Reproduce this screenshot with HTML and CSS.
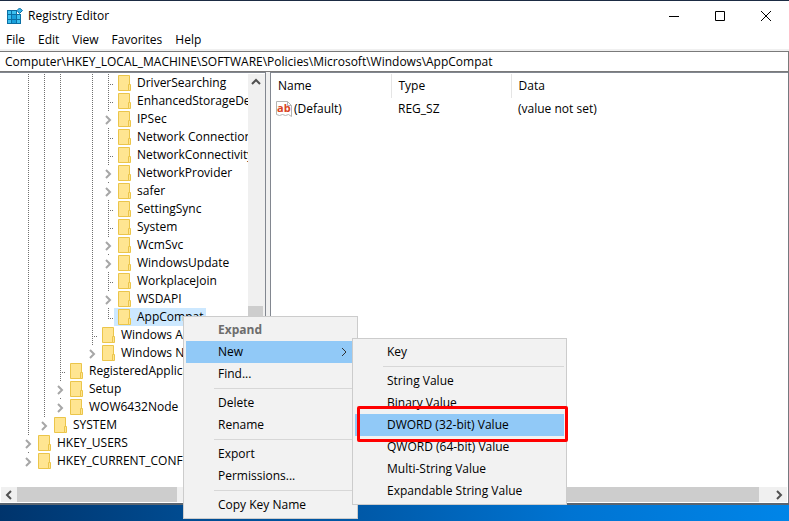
FILE: index.html
```html
<!DOCTYPE html>
<html lang="en">
<head>
    <meta charset="UTF-8">
    <meta name="viewport" content="width=device-width, initial-scale=1.0">
    <title>Registry Editor</title>
    <link rel="stylesheet" href="styles.css">
</head>
<body>
    <!-- Shared icons -->
    <svg class="sprite" aria-hidden="true">
        <symbol id="folder" viewBox="0 0 14 16">
            <path d="M.5 .5h11v15H.5z" fill="#ffe591" stroke="#ebc54a"/>
            <path d="M10.5 9.5h2v6h-2z" fill="#ffe591" stroke="#ebc54a"/>
        </symbol>
        <symbol id="chevron" viewBox="0 0 10 10">
            <path d="M3 1l4 4-4 4" fill="none" stroke="currentColor"/>
        </symbol>
    </svg>

    <div class="window">
        <header class="title-bar">
            <svg class="app-icon" viewBox="0 0 16 16" aria-hidden="true">
                <path d="M0 2h10v4h4v10H0z" fill="#0b6fa4"/>
                <path d="M1 3h3v3H1zM5 3h4v3H5zM1 7h3v4H1zM1 12h3v3H1zM10 7h3v4h-3zM10 12h3v3h-3z" fill="#3cc0ef"/>
                <path d="M5 7h4v4H5zM5 12h4v3H5z" fill="#19a0dc"/>
                <path d="M12.5 0L15.5 2.500 12.5 5.500 10 2.500z" fill="#3cb4e8" stroke="#0b6fa4"/>
            </svg>
            <h1 class="title">Registry Editor</h1>
            <div class="window-buttons">
                <button class="window-button" aria-label="Minimize">
                    <svg viewBox="0 0 10 10"><path d="M0 5.500h10" stroke="#000"/></svg>
                </button>
                <button class="window-button" aria-label="Maximize">
                    <svg viewBox="0 0 10 10"><path d="M.5 .5h9v9h-9z" fill="none" stroke="#000"/></svg>
                </button>
                <button class="window-button" aria-label="Close">
                    <svg viewBox="0 0 10 10"><path d="M0 0l10 10M10 0L0 10" stroke="#000"/></svg>
                </button>
            </div>
        </header>

        <nav class="menu-bar">
            <button>File</button>
            <button>Edit</button>
            <button>View</button>
            <button>Favorites</button>
            <button>Help</button>
        </nav>

        <input class="address" type="text" aria-label="Address" value="Computer\HKEY_LOCAL_MACHINE\SOFTWARE\Policies\Microsoft\Windows\AppCompat">

        <main class="panes">
            <section class="tree-pane">
                <div class="tree-view">
                    <!-- The parent keys are scrolled out of view -->
                    <ul class="tree">
                        <li><ul>
                            <li><ul>
                                <li><ul>
                                    <li class="no-line"><ul>
                                        <li><ul>
                                            <li><div class="row"><span class="branch"></span><svg class="folder"><use href="#folder"/></svg><span class="label">DriverSearching</span></div></li>
                                            <li><div class="row"><span class="branch"></span><svg class="folder"><use href="#folder"/></svg><span class="label">EnhancedStorageDevices</span></div></li>
                                            <li><div class="row"><button class="expander" aria-label="Expand IPSec"><svg><use href="#chevron"/></svg></button><svg class="folder"><use href="#folder"/></svg><span class="label">IPSec</span></div></li>
                                            <li><div class="row"><span class="branch"></span><svg class="folder"><use href="#folder"/></svg><span class="label">Network Connections</span></div></li>
                                            <li><div class="row"><span class="branch"></span><svg class="folder"><use href="#folder"/></svg><span class="label">NetworkConnectivityStatusIndicator</span></div></li>
                                            <li><div class="row"><button class="expander" aria-label="Expand NetworkProvider"><svg><use href="#chevron"/></svg></button><svg class="folder"><use href="#folder"/></svg><span class="label">NetworkProvider</span></div></li>
                                            <li><div class="row"><button class="expander" aria-label="Expand safer"><svg><use href="#chevron"/></svg></button><svg class="folder"><use href="#folder"/></svg><span class="label">safer</span></div></li>
                                            <li><div class="row"><span class="branch"></span><svg class="folder"><use href="#folder"/></svg><span class="label">SettingSync</span></div></li>
                                            <li><div class="row"><span class="branch"></span><svg class="folder"><use href="#folder"/></svg><span class="label">System</span></div></li>
                                            <li><div class="row"><button class="expander" aria-label="Expand WcmSvc"><svg><use href="#chevron"/></svg></button><svg class="folder"><use href="#folder"/></svg><span class="label">WcmSvc</span></div></li>
                                            <li><div class="row"><button class="expander" aria-label="Expand WindowsUpdate"><svg><use href="#chevron"/></svg></button><svg class="folder"><use href="#folder"/></svg><span class="label">WindowsUpdate</span></div></li>
                                            <li><div class="row"><span class="branch"></span><svg class="folder"><use href="#folder"/></svg><span class="label">WorkplaceJoin</span></div></li>
                                            <li><div class="row"><button class="expander" aria-label="Expand WSDAPI"><svg><use href="#chevron"/></svg></button><svg class="folder"><use href="#folder"/></svg><span class="label">WSDAPI</span></div></li>
                                            <li><div class="row"><span class="branch"></span><span class="selected"><svg class="folder"><use href="#folder"/></svg><span class="label">AppCompat</span></span></div></li>
                                        </ul></li>
                                        <li><div class="row"><span class="branch"></span><svg class="folder"><use href="#folder"/></svg><span class="label">Windows Advanced Threat Protection</span></div></li>
                                        <li><div class="row"><button class="expander" aria-label="Expand Windows NT"><svg><use href="#chevron"/></svg></button><svg class="folder"><use href="#folder"/></svg><span class="label">Windows NT</span></div></li>
                                    </ul></li>
                                </ul></li>
                                <li><div class="row"><span class="branch"></span><svg class="folder"><use href="#folder"/></svg><span class="label">RegisteredApplications</span></div></li>
                                <li><div class="row"><button class="expander" aria-label="Expand Setup"><svg><use href="#chevron"/></svg></button><svg class="folder"><use href="#folder"/></svg><span class="label">Setup</span></div></li>
                                <li><div class="row"><button class="expander" aria-label="Expand WOW6432Node"><svg><use href="#chevron"/></svg></button><svg class="folder"><use href="#folder"/></svg><span class="label">WOW6432Node</span></div></li>
                            </ul></li>
                            <li><div class="row"><button class="expander" aria-label="Expand SYSTEM"><svg><use href="#chevron"/></svg></button><svg class="folder"><use href="#folder"/></svg><span class="label">SYSTEM</span></div></li>
                        </ul></li>
                        <li><div class="row"><button class="expander" aria-label="Expand HKEY_USERS"><svg><use href="#chevron"/></svg></button><svg class="folder"><use href="#folder"/></svg><span class="label">HKEY_USERS</span></div></li>
                        <li><div class="row"><button class="expander" aria-label="Expand HKEY_CURRENT_CONFIG"><svg><use href="#chevron"/></svg></button><svg class="folder"><use href="#folder"/></svg><span class="label">HKEY_CURRENT_CONFIG</span></div></li>
                    </ul>
                    <div class="scroll-v">
                        <button class="scroll-button up" aria-label="Scroll up"><svg><use href="#chevron"/></svg></button>
                        <div class="thumb"></div>
                        <button class="scroll-button down" aria-label="Scroll down"><svg><use href="#chevron"/></svg></button>
                    </div>
                </div>
                <div class="scroll-h">
                    <button class="scroll-button left" aria-label="Scroll left"><svg><use href="#chevron"/></svg></button>
                    <div class="thumb"></div>
                    <button class="scroll-button right" aria-label="Scroll right"><svg><use href="#chevron"/></svg></button>
                </div>
            </section>

            <section class="list-pane">
                <div class="list-view">
                    <table class="values">
                        <thead>
                            <tr><th>Name</th><th>Type</th><th>Data</th></tr>
                        </thead>
                        <tbody>
                            <tr>
                                <td>
                                    <div class="value-name">
                                        <svg class="value-icon" viewBox="0 0 16 16" aria-hidden="true">
                                            <path d="M.5 .5h11l4 4v11l-3-2-3 1-3-1-3 1-3-1z" fill="#fff" stroke="#b4b4b4"/>
                                            <path d="M11.5 .5v4h4" fill="none" stroke="#b4b4b4"/>
                                            <text x="1" y="11">ab</text>
                                        </svg>
                                        <span>(Default)</span>
                                    </div>
                                </td>
                                <td>REG_SZ</td>
                                <td>(value not set)</td>
                            </tr>
                        </tbody>
                    </table>
                </div>
                <div class="scroll-h">
                    <button class="scroll-button left" aria-label="Scroll left"><svg><use href="#chevron"/></svg></button>
                    <div class="thumb"></div>
                    <button class="scroll-button right" aria-label="Scroll right"><svg><use href="#chevron"/></svg></button>
                </div>
            </section>
        </main>
    </div>

    <!-- Context menu of the selected key -->
    <div class="menu key-menu">
        <button class="menu-item default" disabled>Expand</button>
        <button class="menu-item active">New <svg><use href="#chevron"/></svg></button>
        <button class="menu-item">Find...</button>
        <hr>
        <button class="menu-item">Delete</button>
        <button class="menu-item">Rename</button>
        <hr>
        <button class="menu-item">Export</button>
        <button class="menu-item">Permissions...</button>
        <hr>
        <button class="menu-item">Copy Key Name</button>
    </div>

    <div class="menu new-menu">
        <button class="menu-item">Key</button>
        <hr>
        <button class="menu-item">String Value</button>
        <button class="menu-item">Binary Value</button>
        <button class="menu-item active">DWORD (32-bit) Value</button>
        <button class="menu-item">QWORD (64-bit) Value</button>
        <button class="menu-item">Multi-String Value</button>
        <button class="menu-item">Expandable String Value</button>
        <div class="marker"></div>
    </div>
</body>
</html>
```

FILE: styles.css
```css
* {
    box-sizing: border-box;
}

body {
    display: flex;
    flex-direction: column;
    min-height: 100vh;
    margin: 0;
    padding-bottom: 16px;
    overflow: hidden;
    background: linear-gradient(90deg, #00346c, #004c92 24%, #0059a8 46%, #0074d2 72%, #0085e8);
    color: #000;
    font-family: "Open Sans", "Noto Sans", sans-serif;
    font-size: 12px;
    line-height: 18px;
}

button {
    margin: 0;
    padding: 0;
    border: 0;
    background: none;
    color: inherit;
    font: inherit;
}

.sprite {
    position: absolute;
    width: 0;
    height: 0;
}

.window {
    display: flex;
    flex: 1;
    flex-direction: column;
    border-top: 1px solid #1b2b43;
    border-bottom: 2px solid #5b6570;
    background: #fff;
}

/* Title bar */
.title-bar {
    display: flex;
    align-items: center;
    height: 30px;
    padding-left: 7px;
}

.app-icon {
    width: 16px;
    height: 16px;
}

.title {
    flex: 1;
    margin: 0 0 0 5px;
    font-size: 12px;
    font-weight: 400;
}

.window-buttons {
    display: flex;
}

.window-button {
    display: flex;
    align-items: center;
    justify-content: center;
    width: 46px;
    height: 30px;
}

.window-button svg {
    width: 10px;
    height: 10px;
}

.menu-bar {
    display: flex;
    gap: 13px;
    height: 20px;
    padding-left: 6px;
    border-bottom: 2px solid #f0f0f0;
}

.address {
    width: 100%;
    height: 21px;
    padding: 0 5px;
    border: 1px solid #7a7a7a;
    border-left: 0;
    outline: 0;
    font: inherit;
}

/* Panes */
.panes {
    display: flex;
    flex: 1;
    border-right: 1px solid #75797f;
    background: #f0f0f0;
}

.tree-pane,
.list-pane {
    display: flex;
    flex-direction: column;
    border-top: 1px solid #828790;
    background: #fff;
}

.tree-pane {
    width: 266px;
    border-right: 1px solid #828790;
}

.list-pane {
    flex: 1;
    margin-left: 4px;
    border-left: 1px solid #828790;
}

.tree-view,
.list-view {
    display: flex;
    flex: 1;
    padding-top: 1px;
}

/* Tree */
.tree {
    flex: 1;
    overflow: hidden;
}

.tree,
.tree ul {
    margin: 0;
    padding: 0;
    list-style: none;
}

.tree {
    padding-left: 20px;
}

.tree ul {
    padding-left: 16px;
}

.tree li {
    background: repeating-linear-gradient(#707070 0 1px, #fff 1px 2px) 8px 0 / 1px 100% no-repeat;
}

/* The line stops at the last key of a branch */
.tree li:last-child {
    background-size: 1px 10px;
}

.tree .no-line {
    background: none;
}

.row,
.selected {
    display: flex;
    align-items: center;
    height: 18px;
    white-space: nowrap;
}

.selected {
    margin-left: -4px;
    padding-left: 4px;
    padding-right: 3px;
    background: #cce8ff;
}

.branch {
    flex: none;
    align-self: flex-start;
    width: 6px;
    height: 11px;
    margin: 0 4px 0 8px;
    background: repeating-linear-gradient(90deg, #707070 0 1px, #fff 1px 2px) 0 100% / 100% 1px no-repeat;
}

.expander {
    display: flex;
    flex: none;
    align-self: flex-end;
    align-items: center;
    justify-content: center;
    width: 16px;
    height: 17px;
    margin-right: 2px;
    background: #fff;
    color: #a6a6a6;
    stroke-width: 2px;
}

.expander svg {
    width: 10px;
    height: 10px;
}

.folder {
    flex: none;
    width: 14px;
    height: 16px;
    margin-right: 5px;
}

/* Scroll bars */
.scroll-v,
.scroll-h {
    display: flex;
    background: #f0f0f0;
    color: #505050;
    stroke-width: 2px;
}

.scroll-v {
    flex-direction: column;
    width: 17px;
}

.scroll-h {
    height: 15px;
    margin: 0 1px 1px;
}

.scroll-button {
    display: flex;
    align-items: center;
    justify-content: center;
    width: 16px;
    height: 15px;
}

.scroll-button svg {
    width: 10px;
    height: 10px;
}

.scroll-button.up svg {
    transform: rotate(-90deg);
}

.scroll-button.down svg {
    transform: rotate(90deg);
}

.scroll-button.left svg {
    transform: rotate(180deg);
}

.thumb {
    background: #cdcdcd;
}

.scroll-v .thumb {
    width: 15px;
    height: 30px;
    margin-top: auto;
    margin-bottom: 136px;
}

.tree-pane .scroll-h .thumb {
    width: 160px;
    margin-right: auto;
}

.list-pane .thumb {
    flex: 1;
    margin-right: 12px;
}

/* Value list */
.values {
    width: 100%;
    table-layout: fixed;
    align-self: flex-start;
    border-collapse: collapse;
}

.values th,
.values td {
    width: 120px;
    height: 22px;
    padding: 0 0 0 7px;
    font-weight: 400;
    text-align: left;
}

.values th {
    height: 24px;
    border-left: 1px solid #e5e5e5;
}

.values th:first-child {
    border-left: 0;
}

.values td:first-child {
    padding-left: 5px;
}

.values th:last-child,
.values td:last-child {
    width: auto;
}

.value-name {
    display: flex;
    align-items: center;
    gap: 2px;
}

.value-icon {
    width: 16px;
    height: 16px;
}

.value-icon text {
    fill: #d9441e;
    font-size: 11px;
    font-weight: 700;
}

/* Popup menus */
.menu {
    position: absolute;
    padding: 2px;
    border: 1px solid #ccc;
    background: #f2f2f2;
}

.key-menu {
    top: 316px;
    left: 183px;
    width: 175px;
}

.new-menu {
    top: 338px;
    left: 352px;
    width: 215px;
}

.menu-item {
    display: flex;
    align-items: center;
    justify-content: space-between;
    width: 100%;
    height: 22px;
    padding: 0 6px 0 32px;
}

.menu-item svg {
    width: 10px;
    height: 10px;
    color: #333;
}

.menu-item.default {
    color: #6d6d6d;
    font-weight: 700;
}

.menu-item.active {
    background: #91c9f7;
}

.menu hr {
    height: 1px;
    margin: 3px 0 3px 28px;
    border: 0;
    background: #d7d7d7;
}

.marker {
    position: absolute;
    top: 67px;
    right: -2px;
    left: 4px;
    height: 36px;
    border: 3px solid #f00;
    border-radius: 2px;
}
```
